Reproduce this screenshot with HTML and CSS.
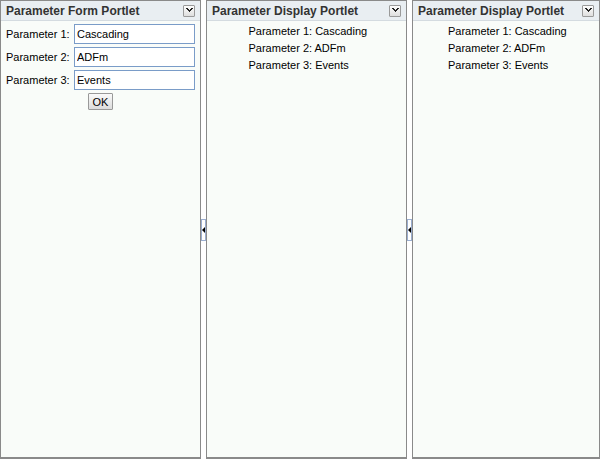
FILE: index.html
```html
<!DOCTYPE html>
<html>
<head>
<meta charset="utf-8">
<link rel="stylesheet" href="styles.css">
</head>
<body>
<div class="layout">
  <div class="portlet p1">
    <div class="header"><span class="title">Parameter Form Portlet</span><span class="menu"><svg width="7" height="5" viewBox="0 0 7 5"><path d="M0 0h2v1h1v1h1v-1h1v-1h2v1h-1v1h-1v1h-1v1h-1v-1h-1v-1h-1v-1h-1z" fill="#222"/></svg></span></div>
    <div class="body form">
      <div class="row"><label>Parameter 1:</label><input class="field" value="Cascading"></div>
      <div class="row"><label>Parameter 2:</label><input class="field" value="ADFm"></div>
      <div class="row"><label>Parameter 3:</label><input class="field" value="Events"></div>
      <div class="btnrow"><button class="ok">OK</button></div>
    </div>
  </div>
  <div class="splitter"><div class="tab"><svg width="4" height="8" viewBox="0 0 4 8"><path d="M0 4L4 0V8Z" fill="#000"/></svg></div></div>
  <div class="portlet p2">
    <div class="header"><span class="title">Parameter Display Portlet</span><span class="menu"><svg width="7" height="5" viewBox="0 0 7 5"><path d="M0 0h2v1h1v1h1v-1h1v-1h2v1h-1v1h-1v1h-1v1h-1v-1h-1v-1h-1v-1h-1z" fill="#222"/></svg></span></div>
    <div class="body display">
      <div class="line">Parameter 1: Cascading</div>
      <div class="line">Parameter 2: ADFm</div>
      <div class="line">Parameter 3: Events</div>
    </div>
  </div>
  <div class="splitter"><div class="tab"><svg width="4" height="8" viewBox="0 0 4 8"><path d="M0 4L4 0V8Z" fill="#000"/></svg></div></div>
  <div class="portlet p3">
    <div class="header"><span class="title">Parameter Display Portlet</span><span class="menu"><svg width="7" height="5" viewBox="0 0 7 5"><path d="M0 0h2v1h1v1h1v-1h1v-1h2v1h-1v1h-1v1h-1v1h-1v-1h-1v-1h-1v-1h-1z" fill="#222"/></svg></span></div>
    <div class="body display">
      <div class="line">Parameter 1: Cascading</div>
      <div class="line">Parameter 2: ADFm</div>
      <div class="line">Parameter 3: Events</div>
    </div>
  </div>
</div>
</body>
</html>
```
FILE: styles.css
```css
html, body {
  margin: 0;
  padding: 0;
  background: #ffffff;
}
.layout {
  display: flex;
  width: 600px;
  height: 459px;
  font-family: "Liberation Sans", Arial, sans-serif;
  font-size: 11px;
  color: #000;
}
.portlet {
  box-sizing: border-box;
  border: 1px solid #8a8a8a;
  border-bottom-width: 2px;
  background: #f9fcf9;
  display: flex;
  flex-direction: column;
}
.p1 { width: 201px; }
.p2 { width: 201px; }
.p3 { width: 188px; }
.splitter {
  width: 5px;
  display: flex;
  align-items: center;
  justify-content: center;
  background: #fff;
}
.tab {
  box-sizing: border-box;
  width: 5px;
  height: 22px;
  border: 1px solid #9aaed0;
  display: flex;
  align-items: center;
  justify-content: center;
  background: #fff;
}
.header {
  height: 20px;
  box-sizing: border-box;
  background: #e9eef2;
  border-bottom: 1px solid #d4dbe0;
  display: flex;
  align-items: center;
  justify-content: space-between;
  padding: 0 5px 0 5px;
}
.title {
  font-family: "Liberation Sans", Arial, sans-serif;
  font-weight: bold;
  font-size: 12px;
  color: #333;
  white-space: nowrap;
}
.menu {
  box-sizing: border-box;
  width: 12px;
  height: 12px;
  border: 1px solid #9a9a9a;
  border-radius: 1px;
  background: linear-gradient(#fdfdfd, #dedede);
  display: flex;
  align-items: center;
  justify-content: center;
}
.menu svg { display: block; }
.form {
  padding: 3px 0 0 5px;
}
.row {
  display: flex;
  align-items: center;
  height: 20px;
  margin-bottom: 3px;
}
.row label {
  width: 68px;
  font-size: 11px;
  white-space: nowrap;
}
.field {
  box-sizing: border-box;
  width: 121px;
  height: 20px;
  border: 1px solid #7a9cc8;
  padding: 0 2px;
  font-family: "Liberation Sans", Arial, sans-serif;
  font-size: 11px;
  background: #fff;
  outline: none;
  color: #000;
}
.btnrow {
  display: flex;
  padding-left: 82px;
  margin-top: 1px;
}
.ok {
  box-sizing: border-box;
  width: 25px;
  height: 17px;
  border: 1px solid #999;
  border-radius: 1px;
  background: linear-gradient(#fafafa, #dcdcdc);
  font-family: "Liberation Sans", Arial, sans-serif;
  font-size: 11px;
  padding: 0;
  color: #000;
}
.display {
  padding: 2px 0 0 0;
  display: flex;
  flex-direction: column;
  align-items: center;
}
.line {
  height: 17px;
  line-height: 17px;
  width: 116px;
  white-space: nowrap;
  font-size: 11px;
}
```
